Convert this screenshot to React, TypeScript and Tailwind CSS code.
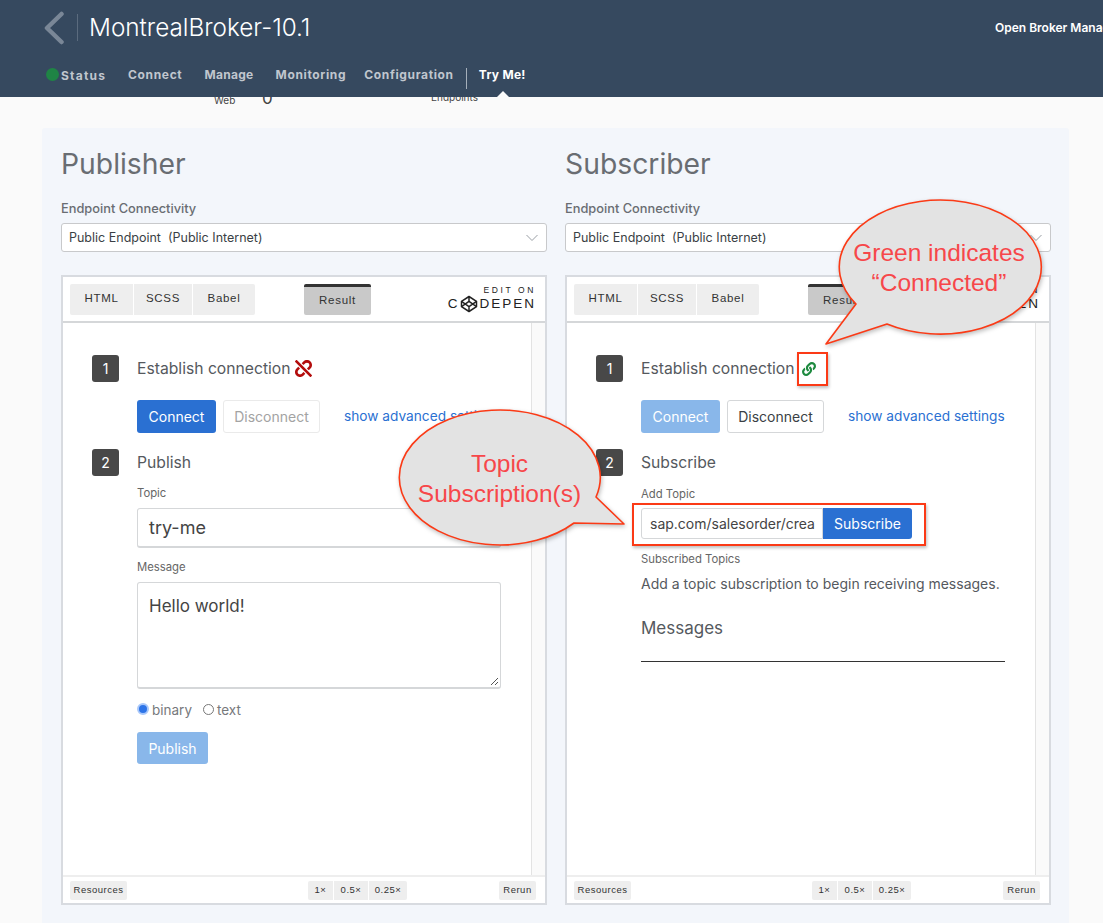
import { FaLink, FaUnlink } from "react-icons/fa";

const FONT = "font-['Inter','Noto_Sans',sans-serif]";

function CodepenMark() {
  return (
    <svg width="18" height="18" viewBox="0 0 24 24" fill="none" stroke="#222" strokeWidth="2" strokeLinejoin="round" className="mx-[1px]">
      <path d="M12 2 22 8.5v7L12 22 2 15.5v-7z" />
      <path d="M12 2v6.5M12 15.5V22M2 8.5l10 7 10-7M2 15.5l10-7 10 7" />
    </svg>
  );
}

function FrameHeader() {
  return (
    <div className="flex h-[46px] items-center border-b-2 border-[#d5d7d9] pl-[7px] pr-[9px] font-['Liberation_Sans',sans-serif] text-[11.5px] tracking-[0.7px] text-[#333]">
      <div className="flex h-[31px] gap-[1px]">
        <div className="flex w-[63px] items-center justify-center rounded-l-[2px] bg-[#eeeeee]">HTML</div>
        <div className="flex w-[58px] items-center justify-center bg-[#eeeeee]">SCSS</div>
        <div className="flex w-[62px] items-center justify-center rounded-r-[2px] bg-[#eeeeee]">Babel</div>
      </div>
      <div className="ml-[49px] flex h-[31px] w-[67px] items-center justify-center rounded-[2px] border-t-[3px] border-[#333] bg-[#c9c9c9]">Result</div>
      <div className="ml-auto flex flex-col items-end text-[#222]">
        <span className="text-[8.5px] leading-[10px] tracking-[2.6px]">EDIT ON</span>
        <span className="flex items-center text-[13.5px] leading-[16px] tracking-[2px]">C<CodepenMark />DEPEN</span>
      </div>
    </div>
  );
}

function FrameFooter() {
  const chip = "flex h-[19px] items-center justify-center bg-[#eeeeee] text-[9.5px] tracking-[0.5px] text-[#333]";
  return (
    <div className="flex h-[28px] items-center justify-between border-t-2 border-[#eeeeee] pl-[7px] pr-[9px] font-['Liberation_Sans',sans-serif]">
      <div className={`${chip} w-[57px] rounded-[2px]`}>Resources</div>
      <div className="ml-[89px] flex gap-[1px]">
        <div className={`${chip} w-[25px] rounded-l-[2px]`}>1×</div>
        <div className={`${chip} w-[34px]`}>0.5×</div>
        <div className={`${chip} w-[38px] rounded-r-[2px]`}>0.25×</div>
      </div>
      <div className={`${chip} w-[37px] rounded-[2px]`}>Rerun</div>
    </div>
  );
}

function StepBadge({ n }: { n: number }) {
  return <div className="flex h-[27px] w-[27px] shrink-0 items-center justify-center rounded-[3px] bg-[#484848] text-[14px] text-white">{n}</div>;
}

function SelectBox() {
  return (
    <div className="flex h-[29px] items-center justify-between rounded-[3px] border border-[#c8c9cb] bg-white pl-[7px] pr-[7px] pt-[1px] text-[12.5px] text-[#3a3f45]">
      <span>Public Endpoint&nbsp; (Public Internet)</span>
      <svg width="14" height="8" viewBox="0 0 14 8" fill="none" stroke="#9a9fa5" strokeWidth="1">
        <path d="M1.5 1 7 6.5 12.5 1" />
      </svg>
    </div>
  );
}

function Buttons({ connected }: { connected: boolean }) {
  return (
    <div className="mt-[18px] flex items-center pl-[45px]">
      <div className={`flex h-[33px] w-[79px] items-center justify-center rounded-[3px] text-[14px] text-white ${connected ? "bg-[#89b7ea]" : "bg-[#2a70d2]"}`}>Connect</div>
      <div className={`ml-[7px] flex h-[33px] w-[97px] items-center justify-center rounded-[3px] border text-[14px] ${connected ? "border-[#d5d7d9] text-[#3a3f45]" : "border-[#eaeaea] text-[#a3a3a3]"}`}>Disconnect</div>
      <span className="ml-[24px] whitespace-nowrap text-[13.7px] text-[#2a70d2]">show advanced settings</span>
    </div>
  );
}

function Frame({ connected, children }: { connected: boolean; children: React.ReactNode }) {
  return (
    <div className="mt-[23px] flex h-[630px] flex-col border-2 border-[#d8dbe0] bg-white">
      <FrameHeader />
      <div className="flex min-h-0 flex-1">
        <div className="flex-1 pl-[29px] pt-[32px]">
          <div className="flex items-center">
            <StepBadge n={1} />
            <span className="ml-[18px] mt-[1px] text-[15.7px] text-[#55595e]">Establish connection</span>
            {connected ? <FaLink className="ml-[7px] text-[14px] text-[#1d8a3f]" /> : <FaUnlink className="ml-[4px] text-[17px] text-[#b30c0c]" />}
          </div>
          <Buttons connected={connected} />
          {children}
        </div>
        <div className="w-[14px] border-l border-[#e3e3e3] bg-[#fafafa]" />
      </div>
      <FrameFooter />
    </div>
  );
}

function PublisherBody() {
  return (
    <div className="mt-[16px]">
      <div className="flex items-center">
        <StepBadge n={2} />
        <span className="ml-[18px] text-[15.7px] text-[#55595e]">Publish</span>
      </div>
      <div className="ml-[45px] w-[364px]">
        <div className="mt-[10px] text-[11.3px] leading-[14px] text-[#666]">Topic</div>
        <div className="mt-[8px] flex h-[40px] items-center rounded-[3px] border-x border-t border-b-2 border-[#d5d7d9] pl-[11px] text-[18px] text-[#444]">try-me</div>
        <div className="mt-[12px] text-[11.3px] leading-[14px] text-[#666]">Message</div>
        <div className="relative mt-[8px] h-[107px] rounded-[3px] border-x border-t border-b-2 border-[#d5d7d9] pl-[11px] pt-[11px] text-[17px] text-[#444]">
          Hello world!
          <svg width="9" height="9" viewBox="0 0 9 9" stroke="#555" strokeWidth="1" className="absolute bottom-[1px] right-[1px]">
            <path d="M1 8 8 1M5 8 8 5" />
          </svg>
        </div>
        <div className="mt-[13px] flex h-[16px] items-center text-[13.5px] text-[#77797c]">
          <span className="h-[12px] w-[12px] -translate-y-[1px] rounded-full border-[2px] border-[#a9c8fa] bg-[#2d74e8]" />
          <span className="ml-[3px]">binary</span>
          <span className="ml-[11px] h-[11px] w-[11px] -translate-y-[1px] rounded-full border border-[#777] bg-white" />
          <span className="ml-[3px]">text</span>
        </div>
        <div className="mt-[14px] flex h-[32px] w-[71px] items-center justify-center rounded-[3px] bg-[#89b7ea] text-[14px] text-white">Publish</div>
      </div>
    </div>
  );
}

function SubscriberBody() {
  return (
    <div className="mt-[16px]">
      <div className="flex items-center">
        <StepBadge n={2} />
        <span className="ml-[18px] text-[15.7px] text-[#55595e]">Subscribe</span>
      </div>
      <div className="ml-[45px] w-[364px]">
        <div className="mt-[11px] text-[11.3px] leading-[14px] text-[#666]">Add Topic</div>
        <div className="mt-[7px] flex h-[31px] w-[271px]">
          <div className="w-[182px] overflow-hidden whitespace-nowrap rounded-l-[3px] border border-[#d5d7d9] pl-[8px] text-[14px] leading-[29px] text-[#444]">
            <div className="w-[165px] overflow-hidden">sap.com/salesorder/created</div>
          </div>
          <div className="flex w-[89px] items-center justify-center rounded-r-[3px] bg-[#2a70d2] text-[14px] text-white">Subscribe</div>
        </div>
        <div className="mt-[13px] text-[11.3px] leading-[14px] text-[#666]">Subscribed Topics</div>
        <div className="mt-[9px] whitespace-nowrap text-[14px] leading-[18px] text-[#55595e]">Add a topic subscription to begin receiving messages.</div>
        <div className="mt-[24px] border-b border-[#333] pb-[22px] text-[17px] leading-[22px] text-[#55595e]">Messages</div>
      </div>
    </div>
  );
}

function Column({ title, children }: { title: string; children: React.ReactNode }) {
  return (
    <div className="w-[486px]">
      <h2 className="text-[28.3px] leading-[34px] text-[#696d72]">{title}</h2>
      <div className="mt-[20px] text-[12.8px] font-medium leading-[16px] text-[#696d72]">Endpoint Connectivity</div>
      <div className="mt-[6px]">
        <SelectBox />
      </div>
      {children}
    </div>
  );
}

function Bubble({ d, viewBox, w, h, className }: { d: string; viewBox: string; w: number; h: number; className: string }) {
  return (
    <svg width={w} height={h} viewBox={viewBox} className={`absolute drop-shadow-[1px_2px_2px_rgba(0,0,0,0.25)] ${className}`}>
      <path d={d} fill="#e3e3e3" stroke="#fb3a16" strokeWidth="1.6" strokeLinejoin="round" />
    </svg>
  );
}

export default function App() {
  const bubbleText = "absolute flex flex-col items-center font-['Liberation_Sans',sans-serif] text-[24.5px] leading-[30px] text-[#f7474a]";
  const marker = "absolute border-2 border-[#fb3a16] shadow-[1px_2px_3px_rgba(0,0,0,0.25)]";
  return (
    <div className={`relative h-[923px] w-[1103px] overflow-hidden bg-[#fafafa] ${FONT}`}>
      <header className="h-[97px] bg-[#36495f]">
        <div className="flex h-[55px] items-center pl-[43px]">
          <svg width="22" height="34" viewBox="0 0 22 34" fill="none" stroke="#7a8797" strokeWidth="4.5" strokeLinecap="round" strokeLinejoin="round">
            <path d="M18.5 3 4 17l14.5 14" />
          </svg>
          <div className="ml-[12px] h-[27px] w-px bg-[#5b6b7e]" />
          <div className="ml-[11px] text-[24.3px] font-light text-white">MontrealBroker-10.1</div>
          <div className="ml-auto w-[108px] overflow-hidden whitespace-nowrap text-[12px] font-semibold text-white">Open Broker Manager</div>
        </div>
        <nav className="relative flex h-[42px] items-start pl-[46px] pt-[13px] text-[12px] font-bold leading-[14px] tracking-[0.65px] text-[#c0c6ce]">
          <span className="h-[13px] w-[13px] rounded-full bg-[#1f8445]" />
          <span className="ml-[2px] mt-[1px] tracking-[1.2px]">Status</span>
          <span className="ml-[22px]">Connect</span>
          <span className="ml-[22px] tracking-[0.3px]">Manage</span>
          <span className="ml-[22px]">Monitoring</span>
          <span className="ml-[18px]">Configuration</span>
          <span className="ml-[12px] h-[21px] w-px bg-[#a5afba]" />
          <span className="ml-[12px] tracking-[0.3px] text-white">Try Me!</span>
          <span className="absolute bottom-0 left-[497px] h-0 w-0 border-x-[6px] border-b-[6px] border-x-transparent border-b-[#fafafa]" />
        </nav>
      </header>
      <div className="relative h-[31px] overflow-hidden text-[#444]">
        <span className="absolute left-[214px] top-[-4px] text-[10px]">Web</span>
        <span className="absolute left-[262px] top-[-11px] text-[17px]">0</span>
        <span className="absolute left-[431px] top-[-7px] text-[10px]">Endpoints</span>
      </div>
      <main className="ml-[42px] flex h-[795px] w-[1027px] gap-[18px] rounded-t-[3px] bg-[#f3f6fb] pl-[19px] pt-[19px]">
        <Column title="Publisher">
          <Frame connected={false}>
            <PublisherBody />
          </Frame>
        </Column>
        <Column title="Subscriber">
          <Frame connected={true}>
            <SubscriberBody />
          </Frame>
        </Column>
      </main>

      <div className={`${marker} left-[797px] top-[352px] h-[34px] w-[31px]`} />
      <div className={`${marker} left-[632px] top-[503px] h-[43px] w-[294px]`} />

      <Bubble
        className="left-[815px] top-[190px]"
        w={240}
        h={165}
        viewBox="815 190 240 165"
        d="M856 304A101 67 0 1 1 887 324L826 344Z"
      />
      <div className={`${bubbleText} left-[838px] top-[238px] w-[202px]`}>
        <span>Green indicates</span>
        <span>“Connected”</span>
      </div>

      <Bubble
        className="left-[390px] top-[400px]"
        w={245}
        h={155}
        viewBox="390 400 245 155"
        d="M596 497L624 524L574 523A100.5 67.5 0 1 1 596 497Z"
      />
      <div className={`${bubbleText} left-[399px] top-[449px] w-[201px]`}>
        <span>Topic</span>
        <span>Subscription(s)</span>
      </div>
    </div>
  );
}
